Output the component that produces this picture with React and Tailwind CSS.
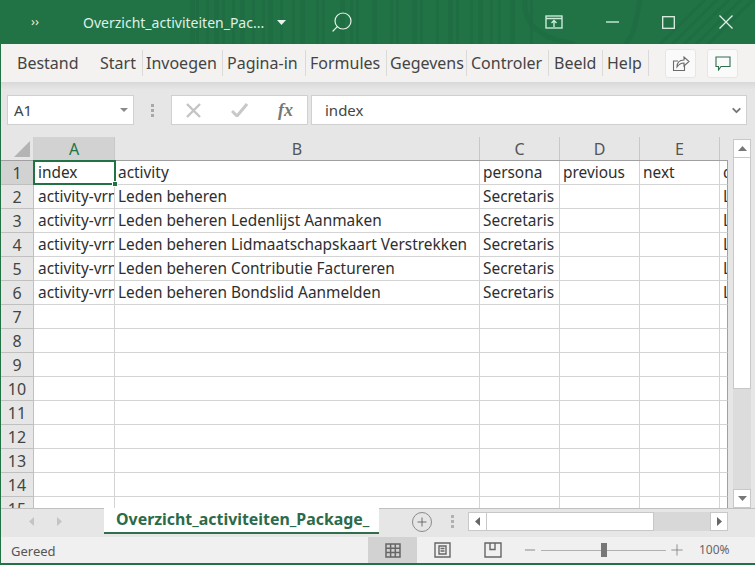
import { ChevronDown, Search, Minus, Plus } from 'lucide-react';

const FONT = "font-['Noto_Sans','Open_Sans',sans-serif]";

const RIBBON_TABS = [
  { label: 'Bestand', w: 'w-[82px]', pad: 'pl-[5px]' },
  { label: 'Start', w: 'w-[48px]', pad: 'pl-[6px]' },
  { label: 'Invoegen', w: 'w-[80px]', pad: 'pl-[3px]', line: true },
  { label: 'Pagina-in', w: 'w-[83px]', pad: 'pl-[4px]', line: true },
  { label: 'Formules', w: 'w-[81px]', pad: 'pl-[4px]', line: true },
  { label: 'Gegevens', w: 'w-[80px]', pad: 'pl-[3px]', line: true },
  { label: 'Controler', w: 'w-[82px]', pad: 'pl-[4px]', line: true },
  { label: 'Beeld', w: 'w-[54px]', pad: 'pl-[5px]', line: true },
  { label: 'Help', w: 'w-[46px]', pad: 'pl-[4px]', line: true },
];

const ROWS = [
  ['index', 'activity', 'persona', 'previous', 'next', 'd'],
  ['activity-vrn', 'Leden beheren', 'Secretaris', '', '', 'L'],
  ['activity-vrn', 'Leden beheren Ledenlijst Aanmaken', 'Secretaris', '', '', 'L'],
  ['activity-vrn', 'Leden beheren Lidmaatschapskaart Verstrekken', 'Secretaris', '', '', 'L'],
  ['activity-vrn', 'Leden beheren Contributie Factureren', 'Secretaris', '', '', 'L'],
  ['activity-vrn', 'Leden beheren Bondslid Aanmelden', 'Secretaris', '', '', 'L'],
];

const COL_HEADS = [
  { label: 'A', w: 'w-[81px]', on: true },
  { label: 'B', w: 'w-[365px]' },
  { label: 'C', w: 'w-[80px]' },
  { label: 'D', w: 'w-[80px]' },
  { label: 'E', w: 'w-[80px]' },
];
const COL_W = ['w-[81px]', 'w-[365px]', 'w-[80px]', 'w-[80px]', 'w-[80px]', 'w-[8px]'];
const ROW_NUMBERS = Array.from({ length: 15 }, (_, i) => i + 1);

// Faint circuit-like stripes behind the title bar
function TitleArt() {
  const stripes = [190, 196, 206, 214, 222, 232, 240, 252, 262, 268, 280, 292, 300, 316, 322, 340, 350, 356, 372, 390, 396, 412, 420, 436, 448, 456, 470, 478, 490, 498, 510, 530];
  return (
    <svg className="absolute inset-0" width="755" height="44" fill="none">
      {stripes.map((x, i) => (
        <rect key={x} x={x} y="0" width={i % 3 === 0 ? 5 : 3} height="44" fill="#1e6b41" opacity="0.6" />
      ))}
      <path d="M525 0 C522 26 545 40 575 44 M625 44 C635 35 636 20 640 0" stroke="#1e6b41" strokeWidth="5" opacity="0.7" />
      <path d="M660 44 L705 0 M672 44 L717 0 M684 44 L729 0 M696 44 L741 0 M708 44 L753 0" stroke="#1e6b41" strokeWidth="3" opacity="0.7" />
    </svg>
  );
}

function TitleBar() {
  return (
    <div className="relative flex h-[44px] shrink-0 items-center bg-[#217346] text-[#dff0e6]">
      <TitleArt />
      <span className="relative ml-[31px] w-[52px] text-[13px]">››</span>
      <span className="relative w-[194px] text-[14px] whitespace-nowrap">Overzicht_activiteiten_Pac...</span>
      <svg className="relative" width="9" height="5"><path d="M0 0h9L4.5 5z" fill="#e6f2ea" /></svg>
      <Search size={24} strokeWidth={1.2} className="relative ml-[44px] -scale-x-100 text-[#e6f2ea]" />
      <svg className="relative ml-[191px]" width="18" height="14" fill="none" stroke="#c9ecd7" strokeWidth="1.4">
        <rect x="1" y="1" width="16" height="12" />
        <path d="M1 3.5h16M9 12V6M6.5 8L9 5.5 11.5 8" />
      </svg>
      <svg className="relative ml-[43px]" width="13" height="2" fill="none" stroke="#c9ecd7" strokeWidth="1.4"><path d="M0 1h13" /></svg>
      <svg className="relative ml-[43px]" width="13" height="13" fill="none" stroke="#dff0e6" strokeWidth="1.3"><rect x="0.7" y="0.7" width="11.6" height="11.6" /></svg>
      <svg className="relative ml-[44px]" width="14" height="14" fill="none" stroke="#dff0e6" strokeWidth="1.3"><path d="M0.5 0.5l13 13M13.5 0.5l-13 13" /></svg>
    </div>
  );
}

function Ribbon() {
  return (
    <div className="flex h-[38px] shrink-0 items-center bg-[#f3f2f1] pl-[11px] text-[16px] text-[#444]">
      {RIBBON_TABS.map((t) => (
        <div key={t.label} className={`${t.w} ${t.pad} flex h-[26px] shrink-0 items-center overflow-hidden whitespace-nowrap ${t.line ? 'border-l border-[#dcdad8]' : ''}`}>
          {t.label}
        </div>
      ))}
      <div className="h-[26px] border-l border-[#dcdad8]" />
      <div className="ml-[16px] flex h-[29px] w-[31px] items-center justify-center rounded-[3px] border border-[#e8e6e4] bg-[#fafafa]">
        <svg width="18" height="17" fill="none" stroke="#6b6b6b" strokeWidth="1.1">
          <path d="M6 6H1.5v9.5h11V11M5 12c0-5 3-7 7-7V2l5 4.5L12 11V8c-3 0-5 1-7 4z" />
        </svg>
      </div>
      <div className="ml-[11px] flex h-[29px] w-[31px] items-center justify-center rounded-[3px] border border-[#e8e6e4] bg-[#fafafa]">
        <svg width="16" height="15" fill="none" stroke="#2f6f4d" strokeWidth="1.1">
          <path d="M1 1h14v9.5H6L3.5 14v-3.5H1z" />
        </svg>
      </div>
    </div>
  );
}

function FormulaBar() {
  return (
    <div className="flex h-[55px] shrink-0 items-start bg-gradient-to-b from-[#d9d9d9] from-0% to-[#e6e6e6] to-[14%] pt-[13px] pl-[6px] text-[15px] text-[#444]">
      <div className="flex h-[30px] w-[127px] items-center justify-between border border-[#d0d0d0] bg-white pr-[5px] pl-[6px]">
        <span>A1</span>
        <svg width="8" height="4"><path d="M0 0h8L4 4z" fill="#8a8a8a" /></svg>
      </div>
      <div className="flex h-[30px] w-[37px] flex-col items-center justify-center gap-[2px]">
        <i className="size-[3px] bg-[#a8a8a8]" />
        <i className="size-[3px] bg-[#a8a8a8]" />
        <i className="size-[3px] bg-[#a8a8a8]" />
      </div>
      <div className="flex h-[30px] w-[137px] items-center border border-[#d0d0d0] bg-white pl-[14px]">
        <svg width="15" height="15" fill="none" stroke="#c4c4c4" strokeWidth="2.4"><path d="M1 1l13 13M14 1L1 14" /></svg>
        <svg className="ml-[30px]" width="17" height="14" fill="none" stroke="#c8c8c8" strokeWidth="3"><path d="M1 8l5 5L16 1" /></svg>
        <span className="ml-[30px] font-['Liberation_Serif',serif] text-[18px] font-bold text-[#777] italic">fx</span>
      </div>
      <div className="ml-[3px] flex h-[30px] w-[436px] items-center justify-between border border-[#d0d0d0] bg-white pr-[3px] pl-[13px]">
        <span>index</span>
        <ChevronDown size={13} strokeWidth={3.5} className="text-[#777]" />
      </div>
    </div>
  );
}

function SheetGrid() {
  return (
    <div className="w-[727px] overflow-hidden">
      <div className="flex h-[24px] border-b border-[#a0a0a0] text-[16px] text-[#555]">
        <div className="relative h-[23px] w-[33px] shrink-0 border-r border-[#d0d0d0] bg-[#e6e6e6]">
          <svg className="absolute right-[3px] bottom-[3px]" width="16" height="16"><path d="M16 0v16H0z" fill="#b4b4b4" /></svg>
        </div>
        {COL_HEADS.map((c) => (
          <div key={c.label} className={`${c.w} flex shrink-0 items-center justify-center border-r border-[#c8c8c8] ${c.on ? 'bg-[#d2d2d2] text-[#217346]' : 'bg-[#e6e6e6]'}`}>
            {c.label}
          </div>
        ))}
        <div className="w-[8px] bg-[#e6e6e6]" />
      </div>
      {ROW_NUMBERS.map((n) => {
        const cells = ROWS[n - 1] ?? ['', '', '', '', '', ''];
        return (
          <div key={n} className="relative flex h-[24px] text-[15.4px] text-[#2e2e2e]">
            <div className={`flex w-[33px] shrink-0 items-center justify-center border-r border-b border-[#c0c0c0] pt-px text-[16px] text-[#444] ${n === 1 ? 'bg-[#d2d2d2]' : 'bg-[#e6e6e6]'}`}>
              {n}
            </div>
            {cells.map((text, i) => (
              <div key={i} className={`${COL_W[i]} flex shrink-0 items-center overflow-hidden border-r border-b bg-white pt-px whitespace-nowrap ${i === 0 ? 'pl-[4px]' : 'pl-[3px]'} ${i === 5 ? 'border-r-[#a0a0a0] border-b-[#d4d4d4]' : 'border-[#d4d4d4]'}`}>
                {text}
              </div>
            ))}
            {n === 1 && (
              <div className="absolute top-[-1px] left-[32px] z-10 h-[25px] w-[83px] border-2 border-[#217346]">
                <div className="absolute right-[-4px] bottom-[-4px] size-[6px] border border-white bg-[#217346]" />
              </div>
            )}
          </div>
        );
      })}
    </div>
  );
}

function VScroll() {
  return (
    <div className="ml-[5px] flex w-[18px] flex-col">
      <div className="mt-[2px] flex h-[19px] items-center justify-center border border-[#c8c8c8] bg-white">
        <svg width="9" height="5"><path d="M4.5 0L9 5H0z" fill="#777" /></svg>
      </div>
      <div className="h-[231px] border-x border-b border-[#c8c8c8] bg-white" />
      <div className="flex-1 bg-[#dcdcdc]" />
      <div className="flex h-[19px] items-center justify-center border border-[#c8c8c8] bg-white">
        <svg width="9" height="5"><path d="M0 0h9L4.5 5z" fill="#777" /></svg>
      </div>
    </div>
  );
}

function SheetTabs() {
  return (
    <div className="flex h-[29px] shrink-0 items-start bg-[#e6e6e6]">
      <div className="flex h-[26px] w-[103px] items-center gap-[23px] border-t border-[#c0c0c0] pl-[28px]">
        <svg width="5" height="9"><path d="M5 0v9L0 4.5z" fill="#c4c4c4" /></svg>
        <svg width="5" height="9"><path d="M0 0v9l5-4.5z" fill="#c4c4c4" /></svg>
      </div>
      <div className="flex h-[26px] w-[275px] items-center overflow-hidden border-b-2 border-[#2f6f4d] bg-white pl-[12px] text-[15.9px] font-bold whitespace-nowrap text-[#2b6b4c]">
        Overzicht_activiteiten_Package_
      </div>
      <div className="flex h-[26px] flex-1 items-center border-t border-[#c0c0c0]">
        <div className="ml-[33px] flex size-[20px] items-center justify-center rounded-full border border-[#8a8a8a]">
          <Plus size={14} strokeWidth={1.6} className="text-[#666]" />
        </div>
        <div className="ml-[19px] flex flex-col gap-[2px]">
          <i className="size-[3px] bg-[#b0b0b0]" />
          <i className="size-[3px] bg-[#b0b0b0]" />
          <i className="size-[3px] bg-[#b0b0b0]" />
        </div>
        <div className="ml-[14px] flex h-[19px] w-[260px] bg-[#d8d8d8]">
          <div className="flex w-[19px] items-center justify-center border border-[#c8c8c8] bg-white">
            <svg width="5" height="9"><path d="M5 0v9L0 4.5z" fill="#666" /></svg>
          </div>
          <div className="w-[167px] border-y border-r border-[#c8c8c8] bg-white" />
          <div className="flex-1" />
          <div className="flex w-[18px] items-center justify-center border border-[#c8c8c8] bg-white">
            <svg width="5" height="9"><path d="M0 0v9l5-4.5z" fill="#666" /></svg>
          </div>
        </div>
      </div>
    </div>
  );
}

function StatusBar() {
  return (
    <div className="flex h-[26px] shrink-0 items-center bg-[#f0f0f0] text-[13px] text-[#555]">
      <span className="w-[367px] pt-[3px] pl-[10px]">Gereed</span>
      <div className="flex h-full w-[49px] items-center justify-center bg-[#d2d2d2]">
        <svg width="16" height="15" fill="none" stroke="#666" strokeWidth="1.5">
          <path d="M1 1h14v13H1zM1 5.3h14M1 9.6h14M5.6 1v13M10.3 1v13" />
        </svg>
      </div>
      <div className="flex w-[51px] justify-center">
        <svg width="17" height="16" fill="none" stroke="#666" strokeWidth="1.4">
          <path d="M1 1h15v14H1zM5 4h7v8H5zM6.5 6.5h4M6.5 9h4" />
        </svg>
      </div>
      <div className="flex w-[49px] justify-center">
        <svg width="18" height="16" fill="none" stroke="#666" strokeWidth="1.4">
          <path d="M1 1h16v14H1zM6 1v6.5h5V1" />
        </svg>
      </div>
      <Minus size={16} strokeWidth={1.1} className="ml-[5px] text-[#666]" />
      <div className="relative ml-[3px] flex h-[16px] w-[125px] items-center">
        <div className="h-px w-full bg-[#b0b0b0]" />
        <div className="absolute left-[60px] h-[14px] w-[6px] bg-[#777]" />
      </div>
      <Plus size={18} strokeWidth={0.9} className="ml-[2px] text-[#666]" />
      <span className="ml-[13px] text-[12px] text-[#666]">100%</span>
    </div>
  );
}

export default function App() {
  return (
    <div className={`flex h-[565px] w-[755px] flex-col overflow-hidden border-b-2 border-l border-[#217346] ${FONT}`}>
      <div className="-ml-px">
        <TitleBar />
      </div>
      <Ribbon />
      <FormulaBar />
      <div className="flex min-h-0 flex-1 bg-[#e6e6e6]">
        <SheetGrid />
        <VScroll />
      </div>
      <SheetTabs />
      <StatusBar />
    </div>
  );
}
